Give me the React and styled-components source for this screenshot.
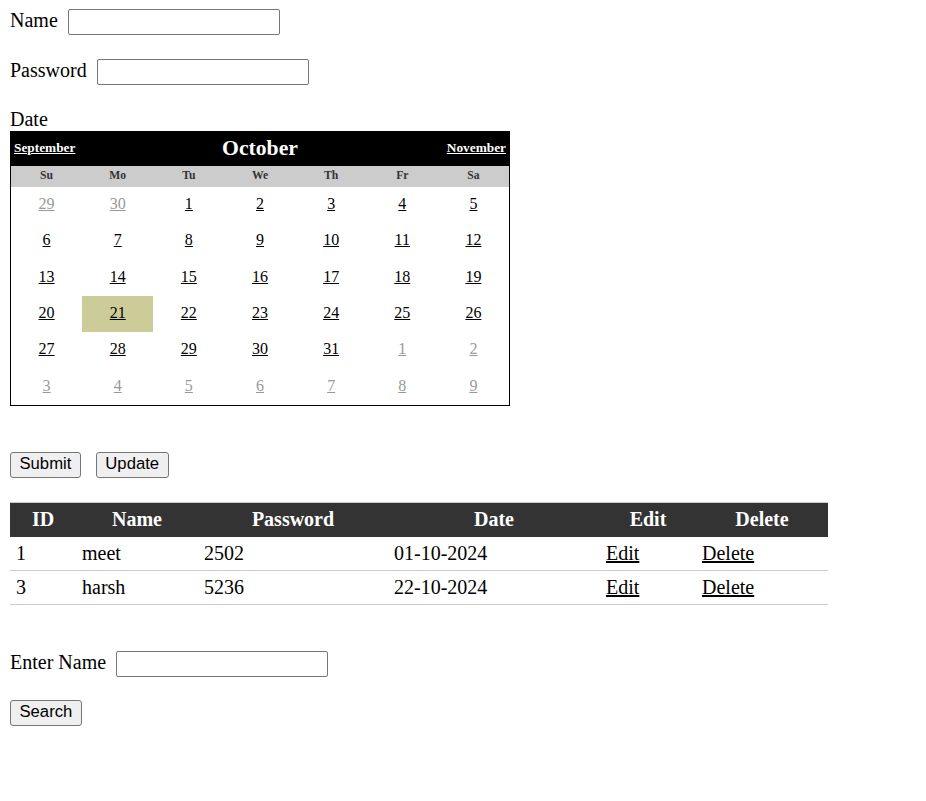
import styled, { createGlobalStyle } from 'styled-components';

const GlobalStyle = createGlobalStyle`
  body {
    margin: 0;
    padding: 9px 10px;
    font-family: "Liberation Serif", "Times New Roman", serif;
    font-size: 20px;
    color: #000;
    background: #fff;
  }
`;

const weeks = [
  [[29, 1], [30, 1], [1], [2], [3], [4], [5]],
  [[6], [7], [8], [9], [10], [11], [12]],
  [[13], [14], [15], [16], [17], [18], [19]],
  [[20], [21, 0, 1], [22], [23], [24], [25], [26]],
  [[27], [28], [29], [30], [31], [1, 1], [2, 1]],
  [[3, 1], [4, 1], [5, 1], [6, 1], [7, 1], [8, 1], [9, 1]],
];

const dayNames = ['Su', 'Mo', 'Tu', 'We', 'Th', 'Fr', 'Sa'];

const rows = [
  { id: 1, name: 'meet', password: '2502', date: '01-10-2024' },
  { id: 3, name: 'harsh', password: '5236', date: '22-10-2024' },
];

const App = () => {
  return (
    <>
      <GlobalStyle />
      <Field>
        <Label>Name</Label>
        <TextBox type="text" />
      </Field>
      <Field $top={24}>
        <Label>Password</Label>
        <TextBox type="text" />
      </Field>
      <DateLabel>Date</DateLabel>
      <Calendar>
        <TitleRow>
          <NavLink href="#" $align="left">September</NavLink>
          <MonthTitle>October</MonthTitle>
          <NavLink href="#" $align="right">November</NavLink>
        </TitleRow>
        <DayHeader>
          {dayNames.map((d) => (
            <DayName key={d}>{d}</DayName>
          ))}
        </DayHeader>
        <DayGrid>
          {weeks.flat().map(([n, other, selected], i) => (
            <DayCell key={i} $selected={selected}>
              <DayLink href="#" $other={other}>{n}</DayLink>
            </DayCell>
          ))}
        </DayGrid>
      </Calendar>
      <ButtonRow>
        <Button>Submit</Button>
        <Button>Update</Button>
      </ButtonRow>
      <Grid>
        <colgroup>
          <col style={{ width: 66 }} />
          <col style={{ width: 122 }} />
          <col style={{ width: 190 }} />
          <col style={{ width: 212 }} />
          <col style={{ width: 96 }} />
          <col style={{ width: 132 }} />
        </colgroup>
        <thead>
          <tr>
            <Th>ID</Th>
            <Th>Name</Th>
            <Th>Password</Th>
            <Th>Date</Th>
            <Th>Edit</Th>
            <Th>Delete</Th>
          </tr>
        </thead>
        <tbody>
          {rows.map((r) => (
            <tr key={r.id}>
              <Td>{r.id}</Td>
              <Td>{r.name}</Td>
              <Td>{r.password}</Td>
              <Td>{r.date}</Td>
              <Td><CellLink href="#">Edit</CellLink></Td>
              <Td><CellLink href="#">Delete</CellLink></Td>
            </tr>
          ))}
        </tbody>
      </Grid>
      <Field $top={46}>
        <Label>Enter Name</Label>
        <TextBox type="text" />
      </Field>
      <ButtonRow $top={23}>
        <Button>Search</Button>
      </ButtonRow>
    </>
  );
};

export default App;

const Field = styled.div`
  display: flex;
  align-items: center;
  gap: 10px;
  height: 26px;
  margin-top: ${(p) => p.$top || 0}px;
`;

const Label = styled.span`
  line-height: 23px;
  padding-bottom: 3px;
`;

const TextBox = styled.input`
  box-sizing: border-box;
  width: 212px;
  height: 26px;
  margin: 0;
  padding: 1px 3px;
  border: 1px solid #767676;
  border-radius: 2px;
  font-family: "Liberation Sans", Arial, sans-serif;
  font-size: 16px;
`;

const DateLabel = styled.div`
  margin-top: 23px;
  line-height: 23px;
`;

const Calendar = styled.div`
  box-sizing: border-box;
  width: 500px;
  border: 1px solid #000;
  background: #fff;
`;

const TitleRow = styled.div`
  display: grid;
  grid-template-columns: 15% 70% 15%;
  align-items: center;
  height: 34px;
  padding: 0 3px 2px;
  box-sizing: border-box;
  background: #000;
  color: #fff;
  font-weight: bold;
`;

const NavLink = styled.a`
  color: #fff;
  font-size: 13.33px;
  text-align: ${(p) => p.$align};
  text-decoration: underline;
`;

const MonthTitle = styled.div`
  text-align: center;
  font-size: 21.67px;
`;

const DayHeader = styled.div`
  display: grid;
  grid-template-columns: repeat(7, 1fr);
  height: 21px;
  padding-bottom: 2px;
  box-sizing: border-box;
  align-items: center;
  background: #ccc;
`;

const DayName = styled.div`
  text-align: center;
  font-size: 11.67px;
  font-weight: bold;
  color: #333;
`;

const DayGrid = styled.div`
  display: grid;
  grid-template-columns: repeat(7, 1fr);
  grid-auto-rows: 36.33px;
`;

const DayCell = styled.div`
  display: flex;
  align-items: center;
  justify-content: center;
  padding-bottom: 2px;
  background: ${(p) => (p.$selected ? '#cccc99' : 'transparent')};
`;

const DayLink = styled.a`
  font-size: 16px;
  color: ${(p) => (p.$other ? '#999' : '#000')};
  text-decoration: underline;
`;

const ButtonRow = styled.div`
  display: flex;
  gap: 15px;
  margin-top: ${(p) => p.$top || 46}px;
`;

const Button = styled.button`
  box-sizing: border-box;
  height: 26px;
  padding: 0 8.5px 1px;
  margin: 0;
  border: 1px solid #767676;
  border-radius: 3px;
  background: #efefef;
  color: #000;
  font-family: "Liberation Sans", Arial, sans-serif;
  font-size: 16.67px;
`;

const Grid = styled.table`
  margin-top: 24px;
  width: 818px;
  table-layout: fixed;
  border-collapse: collapse;
  border-top: 1px solid #ccc;
`;

const Th = styled.th`
  height: 34px;
  padding: 0 6px;
  background: #333;
  color: #fff;
  font-weight: bold;
  text-align: center;
`;

const Td = styled.td`
  height: 33px;
  padding: 0 6px;
  border-bottom: 1px solid #ccc;
  text-align: left;
`;

const CellLink = styled.a`
  color: #000;
  text-decoration: underline;
`;
